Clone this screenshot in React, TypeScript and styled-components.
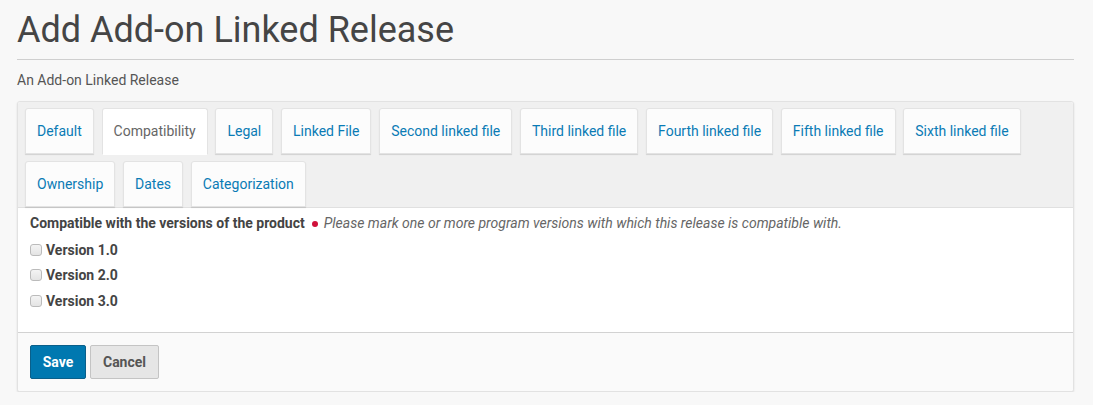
import React from "react";
import styled, { createGlobalStyle } from "styled-components";

const Global = createGlobalStyle`
  html, body { margin: 0; padding: 0; background: #f8f8f8; }
  body { font-family: Roboto, "Noto Sans", sans-serif; color: #444; }
  * { box-sizing: border-box; }
`;

const Page = styled.div`
  padding: 8px 19px 0 17px;
`;

const Title = styled.h1`
  margin: 0;
  font-size: 36px;
  font-weight: 400;
  line-height: 44px;
  color: #454545;
  padding-bottom: 7px;
  border-bottom: 1px solid #cfcfcf;
`;

const Subtitle = styled.p`
  margin: 11px 0 12px;
  font-size: 14px;
  line-height: 18px;
  color: #555;
`;

const Panel = styled.div`
  background: #fff;
  border: 1px solid #e2e2e2;
  border-radius: 3px;
  box-shadow: 0 1px 2px rgba(0, 0, 0, 0.12);
  overflow: hidden;
`;

const TabBar = styled.div`
  background: #f0f0f0;
  border-bottom: 1px solid #e0e0e0;
  padding: 6px 7px 0;
  display: flex;
  flex-wrap: wrap;
  gap: 7px 7.75px;
`;

const Tab = styled.button<{ $active?: boolean }>`
  font-family: Roboto, sans-serif;
  font-size: 14px;
  line-height: 18px;
  padding: 13px 11px 14px;
  border: 1px solid #e3e3e3;
  border-radius: 3px 3px 0 0;
  background: ${(p) => (p.$active ? "#fff" : "#fcfcfc")};
  color: ${(p) => (p.$active ? "#666" : "#0a7bb5")};
  box-shadow: ${(p) => (p.$active ? "none" : "0 1px 1px rgba(0,0,0,0.13)")};
  margin-bottom: ${(p) => (p.$active ? "-1px" : "0")};
  border-bottom-color: ${(p) => (p.$active ? "#fff" : "#e3e3e3")};
  cursor: pointer;
  align-self: flex-start;
  height: ${(p) => (p.$active ? "47px" : "46px")};
`;

const Content = styled.div`
  padding: 5px 12px 18px;
`;

const FieldLabel = styled.div`
  font-size: 14px;
  line-height: 20px;
  font-weight: 700;
  color: #444;
  margin-bottom: 4px;
`;

const Required = styled.span`
  display: inline-block;
  width: 6px;
  height: 6px;
  border-radius: 50%;
  background: #d0103a;
  margin: 0 6px 1px 7px;
  vertical-align: middle;
`;

const Hint = styled.span`
  font-weight: 400;
  font-style: italic;
  color: #666;
`;

const CheckRow = styled.label`
  display: flex;
  align-items: center;
  gap: 4px;
  height: 25.5px;
  font-size: 14px;
  font-weight: 700;
  color: #444;
`;

const Box = styled.span`
  width: 12px;
  height: 12px;
  border: 1px solid #bbb;
  border-radius: 3px;
  background: linear-gradient(#f4f4f4, #e4e4e4);
  display: inline-block;
`;

const Footer = styled.div`
  background: #fafafa;
  border-top: 1px solid #d2d2d2;
  padding: 12px 12px 12px;
  display: flex;
  gap: 4px;
`;

const Button = styled.button<{ $primary?: boolean }>`
  font-family: Roboto, sans-serif;
  font-size: 14px;
  font-weight: 700;
  height: 34px;
  padding: 0 11px;
  border-radius: 2px;
  border: 1px solid ${(p) => (p.$primary ? "#0a5f8a" : "#c4c4c4")};
  background: ${(p) => (p.$primary ? "#0078b0" : "#e6e6e6")};
  color: ${(p) => (p.$primary ? "#fff" : "#555")};
  cursor: pointer;
  width: ${(p) => (p.$primary ? "56px" : "69px")};
`;

const tabs = [
  "Default",
  "Compatibility",
  "Legal",
  "Linked File",
  "Second linked file",
  "Third linked file",
  "Fourth linked file",
  "Fifth linked file",
  "Sixth linked file",
  "Ownership",
  "Dates",
  "Categorization",
];

export default function App() {
  return (
    <Page>
      <Global />
      <Title>Add Add-on Linked Release</Title>
      <Subtitle>An Add-on Linked Release</Subtitle>
      <Panel>
        <TabBar>
          {tabs.map((t) => (
            <Tab key={t} $active={t === "Compatibility"}>
              {t}
            </Tab>
          ))}
        </TabBar>
        <Content>
          <FieldLabel>
            Compatible with the versions of the product
            <Required />
            <Hint>Please mark one or more program versions with which this release is compatible with.</Hint>
          </FieldLabel>
          {["Version 1.0", "Version 2.0", "Version 3.0"].map((v) => (
            <CheckRow key={v}>
              <Box />
              {v}
            </CheckRow>
          ))}
        </Content>
        <Footer>
          <Button $primary>Save</Button>
          <Button>Cancel</Button>
        </Footer>
      </Panel>
    </Page>
  );
}
